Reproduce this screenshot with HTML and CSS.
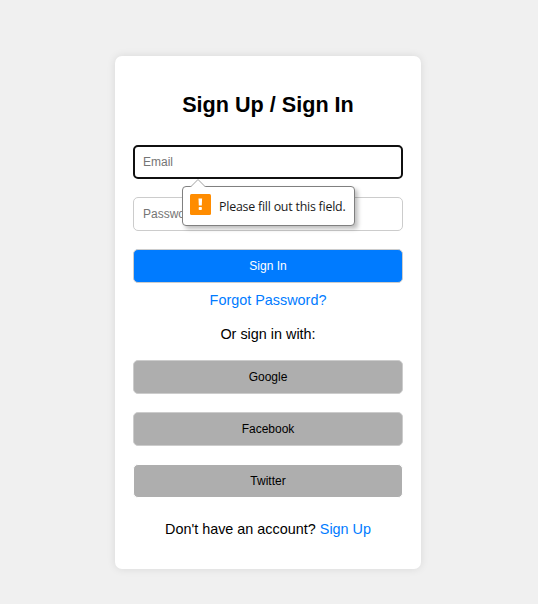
FILE: index.html
```
<!DOCTYPE html>
<html lang="en">
  <head>
    <meta charset="UTF-8" />
    <meta name="viewport" content="width=device-width, initial-scale=1.0" />
    <title>Sign Up / Sign In</title>
    <link rel="stylesheet" href="styles.css">
  </head>
  <body>
    <div class="container">
      <h2>Sign Up / Sign In</h2>
      <form class="form" novalidate>
        <div class="field">
          <input class="active" type="email" placeholder="Email" />
          <div class="tip">
            <svg class="arrow" width="16" height="8" viewBox="0 0 16 8">
              <path d="M0.5 8 L8 0.5 L15.5 8" fill="#fff" stroke="#a0a0a0" />
            </svg>
            <svg class="warn" width="21" height="21" viewBox="0 0 21 21">
              <rect width="21" height="21" rx="1.5" fill="#ff8c00" />
              <path d="M8.5 4.5 h3.6 l-0.3 7 h-3 z" fill="#fff" />
              <rect x="8.7" y="12.9" width="3.2" height="3.1" rx="0.8" fill="#fff" />
            </svg>
            <span>Please fill out this field.</span>
          </div>
        </div>
        <input type="password" placeholder="Password" />
        <button class="login" type="submit">Sign In</button>
      </form>
      <a class="forgot" href="#">Forgot Password?</a>
      <p class="or">Or sign in with:</p>
      <div class="social">
        <button>Google</button>
        <button>Facebook</button>
        <button class="twitter">Twitter</button>
      </div>
      <p class="signup">Don't have an account? <a href="#">Sign Up</a></p>
    </div>
  </body>
</html>
```
FILE: styles.css
```
* {
  box-sizing: border-box;
}
body {
  margin: 0;
  padding-top: 56px;
  min-height: 604px;
  background-color: #f0f0f0;
  font-family: "Liberation Sans", Arial, sans-serif;
  font-size: 14.4px;
  line-height: 17px;
}
.container {
  width: 306px;
  height: 513px;
  margin-left: 115px;
  padding: 18px;
  background-color: #fff;
  border-radius: 7px;
  box-shadow: 0 0 9px rgba(0, 0, 0, 0.1);
  text-align: center;
}
h2 {
  margin: 18px 0 28px;
  font-size: 21.6px;
  line-height: 25px;
}
.form,
.social {
  display: flex;
  flex-direction: column;
  gap: 18px;
}
.field {
  position: relative;
  height: 34px;
}
input,
button {
  display: block;
  width: 100%;
  height: 34px;
  padding: 0 9px;
  border: 1px solid #ccc;
  border-radius: 5px;
  font-family: "Liberation Sans", Arial, sans-serif;
  font-size: 12px;
}
input {
  background-color: #fff;
}
input::placeholder {
  color: #757575;
}
input.active {
  padding: 0 8px;
  border: 2px solid #101010;
}
button {
  background-color: #aeaeae;
  color: #000;
}
.login {
  background-color: #007bff;
  color: #fff;
}
.twitter {
  border-color: #fff;
}
a {
  color: #007bff;
  text-decoration: none;
}
.forgot {
  display: block;
  margin-top: 9px;
}
.or {
  margin: 17px 0;
}
.signup {
  margin: 23px 0 0;
}
/* validation bubble */
.tip {
  position: absolute;
  z-index: 1;
  top: 41px;
  left: 49px;
  display: flex;
  align-items: center;
  width: 173px;
  height: 40px;
  padding: 0 7px 3px;
  background-color: #fff;
  border: 1px solid #808080;
  border-radius: 4px;
  box-shadow: 3px 3px 4px rgba(0, 0, 0, 0.25);
  color: #1a1a1a;
  font-family: "Open Sans", "Noto Sans", sans-serif;
  font-size: 12.4px;
  white-space: nowrap;
}
.warn {
  flex-shrink: 0;
}
.tip span {
  margin: 4px 0 0 8px;
  letter-spacing: -0.22px;
}
.arrow {
  position: absolute;
  top: -8px;
  left: 7px;
}
```
